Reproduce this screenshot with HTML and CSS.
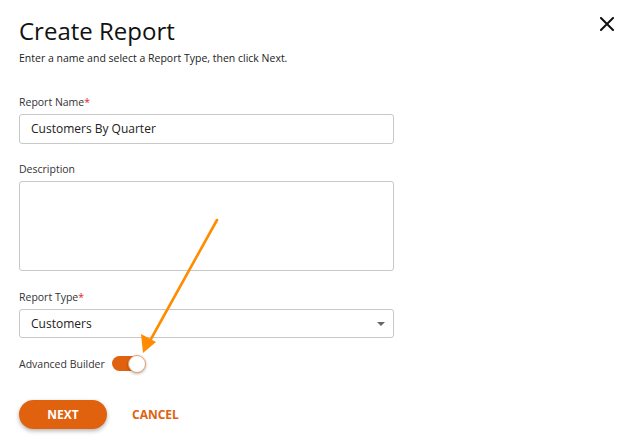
FILE: index.html
```html
<!DOCTYPE html>
<html>
<head>
<meta charset="utf-8">
<link rel="stylesheet" href="styles.css">
</head>
<body>
<div class="dialog">
  <button class="close" aria-label="Close">
    <svg width="14" height="14" viewBox="0 0 14 14"><path d="M1 1 L13 13 M13 1 L1 13" stroke="#111" stroke-width="2" stroke-linecap="square"/></svg>
  </button>
  <h1 class="title">Create Report</h1>
  <p class="subtitle">Enter a name and select a Report Type, then click Next.</p>

  <div class="field name-field">
    <label class="label">Report Name<span class="req">*</span></label>
    <div class="input">Customers By Quarter</div>
  </div>

  <div class="field desc-field">
    <label class="label">Description</label>
    <div class="textarea"></div>
  </div>

  <div class="field type-field">
    <label class="label">Report Type<span class="req">*</span></label>
    <div class="select">Customers<span class="caret"></span></div>
  </div>

  <div class="toggle-row">
    <span class="toggle-label">Advanced Builder</span>
    <span class="toggle"><span class="knob"></span></span>
  </div>

  <div class="actions">
    <button class="next">NEXT</button>
    <button class="cancel">CANCEL</button>
  </div>

  <svg class="annot" width="632" height="442" viewBox="0 0 632 442">
    <line x1="217" y1="220" x2="151" y2="339" stroke="#ff8c00" stroke-width="2.6" stroke-linecap="round"/>
    <polygon points="143,353 141,334 156,342" fill="#ff8c00"/>
  </svg>
</div>
</body>
</html>
```

FILE: styles.css
```css
html, body {
  margin: 0;
  padding: 0;
  background: #fff;
}
body {
  font-family: "Open Sans", "Noto Sans", sans-serif;
  color: #222;
}
.dialog {
  position: relative;
  width: 632px;
  height: 442px;
  box-sizing: border-box;
  padding: 14px 0 0 19px;
  display: flex;
  flex-direction: column;
}
.close {
  position: absolute;
  top: 17px;
  left: 600px;
  padding: 0;
  border: 0;
  background: none;
  width: 14px;
  height: 14px;
  display: flex;
}
.title {
  margin: 0;
  font-size: 24px;
  font-weight: 400;
  line-height: 34px;
  color: #111;
}
.subtitle {
  margin: 3px 0 0;
  font-size: 10.5px;
  line-height: 14px;
  color: #222;
}
.field {
  display: flex;
  flex-direction: column;
  width: 375px;
}
.name-field { margin-top: 30px; }
.desc-field { margin-top: 18px; }
.type-field { margin-top: 19px; }
.label {
  font-size: 10.5px;
  line-height: 14px;
  color: #333;
  margin-bottom: 5px;
}
.req { color: #e02424; }
.input, .select, .textarea {
  box-sizing: border-box;
  border: 1px solid #c8c8c8;
  border-radius: 3px;
  background: #fff;
  font-size: 12px;
  color: #222;
}
.input {
  height: 30px;
  line-height: 28px;
  padding: 0 11px;
}
.textarea {
  height: 90px;
}
.select {
  height: 29px;
  line-height: 27px;
  padding: 0 11px;
  position: relative;
}
.caret {
  position: absolute;
  right: 8px;
  top: 12px;
  width: 0;
  height: 0;
  border-left: 4px solid transparent;
  border-right: 4px solid transparent;
  border-top: 4px solid #666;
}
.toggle-row {
  display: flex;
  align-items: center;
  margin-top: 17px;
  height: 17px;
}
.toggle-label {
  font-size: 10.5px;
  color: #333;
  margin-right: 7px;
}
.toggle {
  position: relative;
  width: 32px;
  height: 15px;
  border-radius: 8px;
  background: #e0620f;
}
.knob {
  position: absolute;
  right: -2px;
  top: -1px;
  width: 16px;
  height: 16px;
  border-radius: 50%;
  background: #fff;
  border: 1px solid #e8a070;
  box-shadow: 0 1px 3px rgba(0,0,0,0.3);
}
.actions {
  display: flex;
  align-items: center;
  margin-top: 28px;
}
.next {
  width: 88px;
  height: 29px;
  border: 0;
  border-radius: 15px;
  background: #e0620f;
  color: #fff;
  font-family: "Open Sans", sans-serif;
  font-weight: 700;
  font-size: 12px;
  box-shadow: 0 2px 4px rgba(0,0,0,0.3);
  padding: 0;
}
.cancel {
  margin-left: 25px;
  border: 0;
  background: none;
  padding: 0;
  color: #e0620f;
  font-family: "Open Sans", sans-serif;
  font-weight: 700;
  font-size: 12px;
}
.annot {
  position: absolute;
  left: 0;
  top: 0;
  pointer-events: none;
}
```
